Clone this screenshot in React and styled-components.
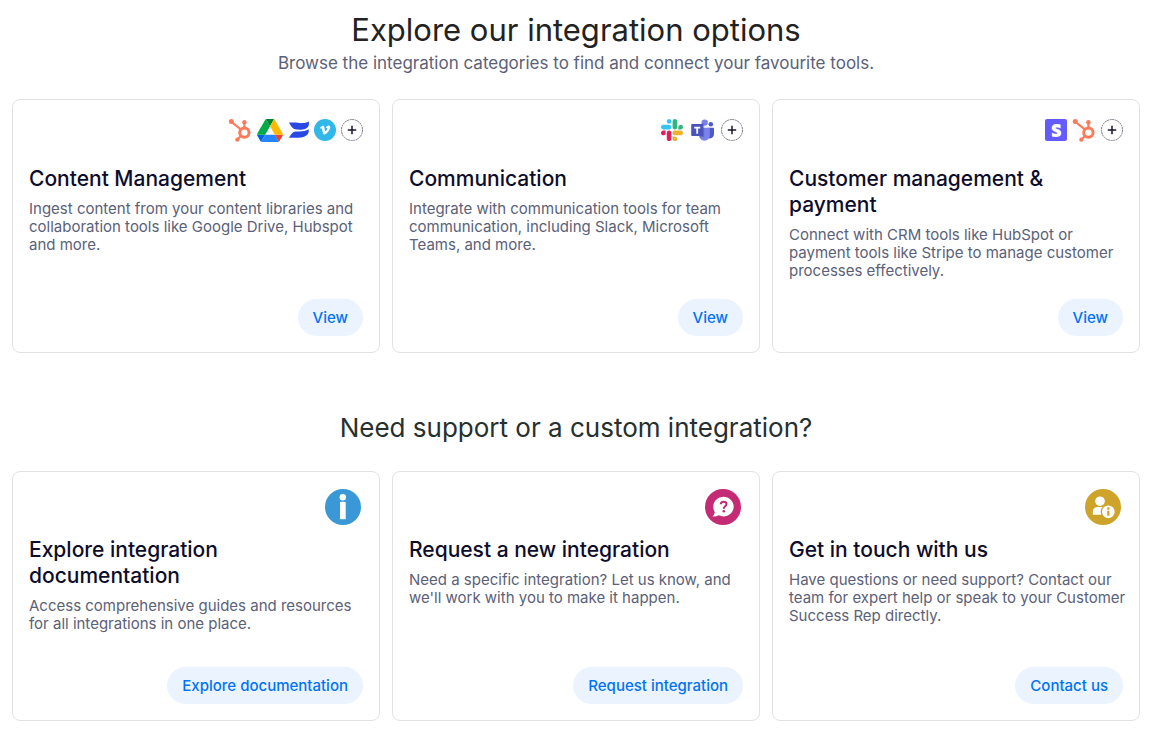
import React from "react";
import styled, { createGlobalStyle } from "styled-components";
import { FaStripeS, FaVimeoV } from "react-icons/fa";

const GlobalStyle = createGlobalStyle`
  *, *::before, *::after { box-sizing: border-box; }
  body {
    margin: 0;
    background: #fff;
    font-family: Inter, "Liberation Sans", sans-serif;
  }
  h1, h2, h3, p { margin: 0; }
`;

const Page = styled.main`
  padding: 9px 15px 12px 12px;
`;

const PageTitle = styled.h1`
  font-size: 31px;
  line-height: 42px;
  font-weight: 400;
  color: #222;
  text-align: center;
`;

const Subtitle = styled.p`
  font-size: 17px;
  line-height: 24px;
  color: #5b6178;
  text-align: center;
`;

const SectionTitle = styled.h2`
  margin-top: 56px;
  font-size: 26px;
  line-height: 38px;
  font-weight: 400;
  color: #26302f;
  text-align: center;
`;

const CardGrid = styled.section`
  display: grid;
  grid-template-columns: repeat(3, minmax(0, 1fr));
  gap: 12px;
  margin-top: 24px;
`;

const Card = styled.article`
  display: flex;
  flex-direction: column;
  min-height: 250px;
  padding: 16px;
  border: 1px solid #e2e2e4;
  border-radius: 8px;
  background: #fff;
`;

const IconRow = styled.div`
  display: flex;
  justify-content: flex-end;
  align-items: center;
  gap: 5px;
  height: 28px;
  margin-bottom: 22px;
`;

const BadgeRow = styled.div`
  display: flex;
  justify-content: flex-end;
  height: 38px;
  padding: 1px 2px;
  margin-bottom: 11px;
`;

const CardTitle = styled.h3`
  font-size: 21px;
  line-height: 26px;
  font-weight: 500;
  color: #0d0d2b;
`;

const CardText = styled.p`
  margin: 8px -4px 0 0;
  font-size: 15px;
  line-height: 18px;
  color: #5b6178;
`;

const CardAction = styled.div`
  display: flex;
  justify-content: flex-end;
  margin-top: auto;
  padding-top: 19px;
`;

const PillButton = styled.button`
  height: 37px;
  padding: 0 15px;
  border: 0;
  border-radius: 19px;
  background: #ebf3ff;
  color: #0073f5;
  font: inherit;
  font-size: 15px;
  font-weight: 500;
  cursor: pointer;
`;

const LogoTile = styled.span`
  display: flex;
  align-items: center;
  justify-content: center;
  width: 22px;
  height: 22px;
  border-radius: ${(p) => (p.$round ? "50%" : "2px")};
  background: ${(p) => p.$color};
  color: #fff;
`;

const HubspotLogo = () => (
  <svg width="24" height="24" viewBox="0 0 24 24" fill="none" stroke="#ff7a59" aria-hidden="true">
    <circle cx="16.4" cy="14.6" r="4.7" strokeWidth="3" />
    <path d="M16.4 10V4.5M12.800 11.400 3.500 4M13 17.800l-3.400 3.600" strokeWidth="2.200" />
    <g fill="#ff7a59" stroke="none">
      <circle cx="16.4" cy="4.2" r="2.2" />
      <circle cx="3.3" cy="3.4" r="2.5" />
      <circle cx="9.3" cy="21.7" r="2.1" />
    </g>
  </svg>
);

const DriveLogo = () => (
  <svg width="26" height="23" viewBox="0 0 87.3 78" aria-hidden="true">
    <path d="m6.6 66.85 3.85 6.65c.8 1.4 1.95 2.5 3.3 3.3l13.75-23.8h-27.5c0 1.55.4 3.1 1.2 4.5z" fill="#0066da" />
    <path d="m43.65 25-13.75-23.8c-1.35.8-2.5 1.9-3.3 3.3l-25.4 44a9.06 9.06 0 0 0-1.2 4.5h27.5z" fill="#00ac47" />
    <path d="m73.55 76.8c1.35-.8 2.5-1.9 3.3-3.3l1.6-2.75 7.65-13.25c.8-1.4 1.2-2.95 1.2-4.5h-27.502l5.852 11.5z" fill="#ea4335" />
    <path d="m43.65 25 13.75-23.8c-1.35-.8-2.9-1.2-4.5-1.2h-18.5c-1.6 0-3.15.45-4.5 1.2z" fill="#00832d" />
    <path d="m59.8 53h-32.3l-13.75 23.8c1.35.8 2.9 1.2 4.5 1.2h50.8c1.6 0 3.15-.45 4.5-1.2z" fill="#2684fc" />
    <path d="m73.4 26.5-12.7-22c-.8-1.4-1.95-2.5-3.3-3.3l-13.75 23.8 16.15 28h27.45c0-1.55-.4-3.1-1.2-4.5z" fill="#ffba00" />
  </svg>
);

const WistiaLogo = () => (
  <svg width="21" height="18" viewBox="0 0 21 18" fill="#2949e5" aria-hidden="true">
    <path d="M1 1.5h5.2c3.2 0 5.3.9 8.1.6C17.6 1.8 19.8.9 20.7.4c.8 3.3-.2 6.1-3.1 7.3-2.9 1.3-7.2 1-9.3.8C5.4 8.2 3.5 6.200 1 1.500Z" />
    <path d="M1 16.800h6c4.200 0 8.600 0 11.400-2.200 2.200-1.700 2.700-4.200 2.200-6.300-2.200 1.600-5.800 2.200-9.300 2.200H7.600C4.900 10.500 3 13 1 16.800Z" />
  </svg>
);

const SlackLogo = () => (
  <svg width="24" height="22" viewBox="0 0 134 122.8" aria-hidden="true">
    <path d="M25.800 77.600c0 7.100-5.800 12.900-12.900 12.900S0 84.700 0 77.600s5.800-12.900 12.900-12.900h12.900v12.900zm6.500 0c0-7.100 5.800-12.900 12.900-12.900s12.900 5.800 12.900 12.900v32.300c0 7.100-5.800 12.900-12.900 12.900s-12.900-5.800-12.900-12.900V77.600z" fill="#e01e5a" />
    <path d="M45.200 25.800c-7.100 0-12.900-5.800-12.900-12.900S38.100 0 45.200 0s12.900 5.800 12.900 12.900v12.900H45.200zm0 6.500c7.100 0 12.900 5.800 12.900 12.900s-5.800 12.900-12.900 12.900H12.900C5.800 58.100 0 52.300 0 45.200s5.800-12.900 12.900-12.900h32.300z" fill="#36c5f0" />
    <path d="M97 45.200c0-7.100 5.800-12.900 12.900-12.900s12.900 5.800 12.900 12.900-5.800 12.900-12.900 12.900H97V45.200zm-6.500 0c0 7.100-5.800 12.900-12.900 12.900s-12.900-5.800-12.900-12.900V12.900C64.700 5.800 70.500 0 77.600 0s12.900 5.800 12.900 12.900v32.300z" fill="#2eb67d" />
    <path d="M77.600 97c7.100 0 12.900 5.800 12.900 12.900s-5.800 12.900-12.900 12.900-12.900-5.800-12.900-12.900V97h12.900zm0-6.500c-7.100 0-12.900-5.800-12.900-12.900s5.800-12.900 12.900-12.900h32.300c7.100 0 12.900 5.800 12.900 12.900s-5.800 12.900-12.900 12.900H77.600z" fill="#ecb22e" />
  </svg>
);

const TeamsLogo = () => (
  <svg width="26" height="24" viewBox="0 0 26 24" aria-hidden="true">
    <circle cx="20.8" cy="6.3" r="2.3" fill="#5059c9" />
    <path d="M17 9.800h6c.6 0 1 .4 1 1v5.300c0 2.500-1.600 4.300-3.900 4.300-1.200 0-2.200-.4-3.100-1.200z" fill="#5059c9" />
    <circle cx="14.7" cy="4.6" r="3.2" fill="#7b83eb" />
    <path d="M9.500 9.800h9.300c.6 0 1 .4 1 1v6.300c0 3.300-2.400 5.600-5.400 5.600s-5.200-2.200-5.200-5.600z" fill="#7b83eb" />
    <path d="M11.500 5.500h2.700v14H9.600c-.3-.8-.4-1.500-.4-2.400V6.500z" fill="#464eb8" opacity=".45" />
    <rect x="1.200" y="6" width="12" height="12" rx="1" fill="#4b53bc" />
    <path d="M4.200 8.700h6v1.700H8.100v5.400H6.300v-5.400H4.200z" fill="#fff" />
  </svg>
);

const VimeoLogo = () => (
  <LogoTile $round $color="#32b8e8">
    <FaVimeoV size={12} aria-hidden="true" />
  </LogoTile>
);

const StripeLogo = () => (
  <LogoTile $color="#635bff">
    <FaStripeS size={13} stroke="#fff" strokeWidth="16" aria-hidden="true" />
  </LogoTile>
);

const MoreIcon = () => (
  <svg width="22" height="22" viewBox="0 0 22 22" fill="none" aria-hidden="true">
    <circle cx="11" cy="11" r="10.5" stroke="#77788a" strokeWidth="1" strokeDasharray="2 .6" />
    <path d="M11 6.800v8.400M6.800 11h8.400" stroke="#17172f" strokeWidth="1.500" />
  </svg>
);

const InfoBadge = () => (
  <svg width="36" height="36" viewBox="0 0 36 36" aria-hidden="true">
    <circle cx="18" cy="18" r="18" fill="#3998d5" />
    <circle cx="17.8" cy="8.3" r="3.2" fill="#fff" />
    <rect x="15" y="12.800" width="5.700" height="17.400" fill="#fff" />
  </svg>
);

const QuestionBadge = () => (
  <svg width="36" height="36" viewBox="0 0 36 36" fill="none" aria-hidden="true">
    <circle cx="18" cy="18" r="18" fill="#c52a75" />
    <path d="M18.500 7.800c5.700 0 10.200 4.400 10.200 9.800s-4.500 9.800-10.200 9.800c-1.700 0-3.300-.4-4.700-1.100-1.800 1-3.800 1.400-6.200 1.200 1.200-1.200 1.900-2.600 2.200-4.300a9.500 9.500 0 0 1-1.500-5.600c0-5.400 4.500-9.800 10.200-9.800Z" fill="#fff" />
    <path d="M15.700 15.300c.1-1.700 1.300-2.600 2.900-2.600 1.700 0 2.900 1 2.900 2.400 0 2.200-2.700 2.200-2.700 4.600" stroke="#c52a75" strokeWidth="2" />
    <circle cx="18.8" cy="22.3" r="1.3" fill="#c52a75" />
  </svg>
);

const ContactBadge = () => (
  <svg width="36" height="36" viewBox="0 0 36 36" aria-hidden="true">
    <circle cx="18" cy="18" r="18" fill="#cda429" />
    <circle cx="15" cy="12.2" r="4.8" fill="#fff" />
    <path d="M7.800 25.700v-2.900c0-3 2.100-4.800 4.700-4.800h5.200c1.200 0 2.200.3 3 1v6.700z" fill="#fff" />
    <circle cx="23.3" cy="22.800" r="7" fill="#fff" stroke="#cda429" strokeWidth="1.300" />
    <circle cx="23.3" cy="19.5" r="1.3" fill="#cda429" />
    <rect x="22.200" y="21.700" width="2.200" height="5" fill="#cda429" />
  </svg>
);

const categories = [
  {
    title: "Content Management",
    text: "Ingest content from your content libraries and collaboration tools like Google Drive, Hubspot and more.",
    logos: [HubspotLogo, DriveLogo, WistiaLogo, VimeoLogo],
  },
  {
    title: "Communication",
    text: "Integrate with communication tools for team communication, including Slack, Microsoft Teams, and more.",
    logos: [SlackLogo, TeamsLogo],
  },
  {
    title: "Customer management & payment",
    text: "Connect with CRM tools like HubSpot or payment tools like Stripe to manage customer processes effectively.",
    logos: [StripeLogo, HubspotLogo],
  },
];

const supportOptions = [
  {
    title: "Explore integration documentation",
    text: "Access comprehensive guides and resources for all integrations in one place.",
    Badge: InfoBadge,
    action: "Explore documentation",
  },
  {
    title: "Request a new integration",
    text: "Need a specific integration? Let us know, and we'll work with you to make it happen.",
    Badge: QuestionBadge,
    action: "Request integration",
  },
  {
    title: "Get in touch with us",
    text: "Have questions or need support? Contact our team for expert help or speak to your Customer Success Rep directly.",
    Badge: ContactBadge,
    action: "Contact us",
  },
];

export default function App() {
  return (
    <>
      <GlobalStyle />
      <Page>
        <PageTitle>Explore our integration options</PageTitle>
        <Subtitle>Browse the integration categories to find and connect your favourite tools.</Subtitle>
        <CardGrid>
          {categories.map(({ title, text, logos }) => (
            <Card key={title}>
              <IconRow>
                {logos.map((Logo, i) => (
                  <Logo key={i} />
                ))}
                <MoreIcon />
              </IconRow>
              <CardTitle>{title}</CardTitle>
              <CardText>{text}</CardText>
              <CardAction>
                <PillButton type="button">View</PillButton>
              </CardAction>
            </Card>
          ))}
        </CardGrid>
        <SectionTitle>Need support or a custom integration?</SectionTitle>
        <CardGrid>
          {supportOptions.map(({ title, text, Badge, action }) => (
            <Card key={title}>
              <BadgeRow>
                <Badge />
              </BadgeRow>
              <CardTitle>{title}</CardTitle>
              <CardText>{text}</CardText>
              <CardAction>
                <PillButton type="button">{action}</PillButton>
              </CardAction>
            </Card>
          ))}
        </CardGrid>
      </Page>
    </>
  );
}
